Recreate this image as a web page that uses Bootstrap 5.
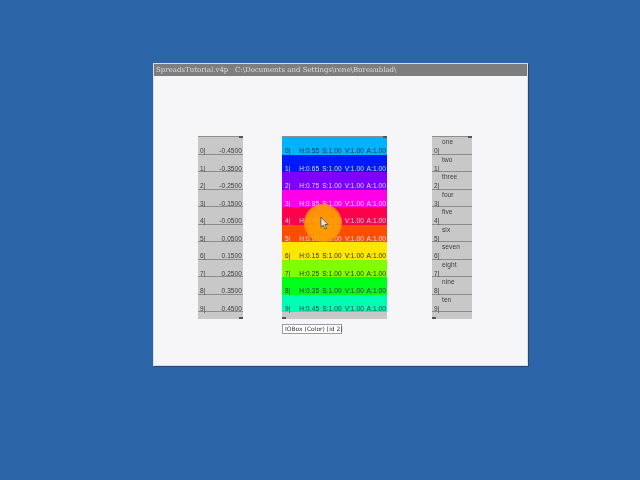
<!DOCTYPE html>
<html lang="en">
<head>
<meta charset="utf-8">
<title>SpreadsTutorial.v4p</title>
<link rel="stylesheet" href="https://cdn.jsdelivr.net/npm/bootstrap@5.3.0/dist/css/bootstrap.min.css">
<style>
html,body{width:640px;height:480px;margin:0;overflow:hidden}
body{background:#2c65a8;font-family:"Liberation Sans",Arial,sans-serif;padding:63px 0 0 153px}
.app-win{width:375px;height:303px;background:#f6f5f8;border:1px solid #dcdde2;box-shadow:1px 1px 0 #1f4a80;position:relative}
.win-title{height:12px;background:#7d7d7d;color:#dedcdc;font:7px/13px "DejaVu Serif","Liberation Serif",serif;padding-left:2px;white-space:pre;filter:blur(.35px)}
.patches{padding:60px 0 0 44px}
.spread{border-top:1px solid #8e8e8e;position:relative}
.spread-l{width:45px}
.spread-c{width:105px;margin-left:39px}
.spread-r{width:40px;margin-left:45px}
.pin{position:absolute;width:4px;height:2px;background:#555;z-index:2}
.pin-t{top:-1px;right:0}
.pin-b{bottom:0}
.pin-bl{left:0}
.pin-br{right:0}
.cell{height:17.5px;font:6.5px/1 "Liberation Sans",sans-serif;color:#3d3d3d;letter-spacing:.1px;filter:blur(.3px)}
.gr .cell{background:#c9c8c9;border-bottom:1px solid #8c8c8c}
.gr{background:#c9c8c9}
.cell-v{padding:11px 1px 0 2px}
.cell-t{padding:1px 0 0 2px}
.cell-t span{display:block;line-height:7px}
.cell-t .nm{padding-left:8px}
.cell-t .ix{margin-top:2px}
.cc{padding:11px 1px 0 3px;color:#1f2c44;word-spacing:1.2px}
.cc.dk{color:#dcdcf0}
.foot{height:7px;background:#c9c8c9}
.tip{width:60px;height:10px;margin:5px 0 0 128px;border:1px solid #9c9c9c;background:#fff;font:6px/8px "DejaVu Sans",sans-serif;color:#333;padding-left:2px;white-space:nowrap;filter:blur(.25px)}
.glow{position:absolute;left:150px;top:140px;width:38px;height:38px;border-radius:50%;background:radial-gradient(circle,rgba(255,165,0,.92) 0,rgba(255,160,0,.9) 62%,rgba(255,125,0,.6) 84%,rgba(255,90,0,0) 100%)}
.arrow{position:absolute;left:166px;top:153px;width:9px;height:13px;filter:blur(.3px)}
</style>
</head>
<body>
<div class="app-win">
  <div class="win-title">SpreadsTutorial.v4p   C:\Documents and Settings\rene\Bureaublad\</div>
  <div class="patches d-flex align-items-start">
    <div class="spread spread-l gr"><i class="pin pin-t"></i><i class="pin pin-b pin-br"></i><div id="l"></div></div>
    <div class="spread spread-c"><i class="pin pin-t"></i><i class="pin pin-b pin-bl"></i><div id="c"></div></div>
    <div class="spread spread-r gr"><i class="pin pin-t"></i><i class="pin pin-b pin-bl"></i><div id="r"></div></div>
  </div>
  <div class="tip">IOBox (Color) [id 2]</div>
  <div class="glow"></div>
  <svg class="arrow" viewBox="0 0 10 14"><path d="M1 0v11l2.6-2.2 2 4.4 1.8-.8-2-4.2H9z" fill="#e8e8e8" stroke="#444" stroke-width=".9"/></svg>
</div>
<script>
const vals=["-0.4500","-0.3500","-0.2500","-0.1500","-0.0500","0.0500","0.1500","0.2500","0.3500","0.4500"];
const names=["one","two","three","four","five","six","seven","eight","nine","ten"];
const cols=["#00b3ff","#0019ff","#7f00ff","#ff00e6","#ff004d","#ff4d00","#ffe600","#7fff00","#00ff19","#00ffb3"];
const hs=["0.55","0.65","0.75","0.85","0.95","0.05","0.15","0.25","0.35","0.45"];
let L="",C="",R="";
for(let i=0;i<10;i++){
 L+=`<div class="cell cell-v d-flex justify-content-between"><span>${i}|</span><span>${vals[i]}</span></div>`;
 R+=`<div class="cell cell-t"><span class="nm">${names[i]}</span><span class="ix">${i}|</span></div>`;
 const dk=i>=1&&i<=5;
 C+=`<div class="cell cc d-flex justify-content-between${dk?" dk":""}" style="background:${cols[i]}"><span>${i}|</span><span>H:${hs[i]} S:1.00 V:1.00 A:1.00</span></div>`;
}
document.getElementById("l").innerHTML=L+'<div class="foot"></div>';
document.getElementById("c").innerHTML=C+'<div class="foot"></div>';
document.getElementById("r").innerHTML=R+'<div class="foot"></div>';
</script>
<script src="https://cdn.jsdelivr.net/npm/bootstrap@5.3.0/dist/js/bootstrap.bundle.min.js"></script>
</body>
</html>
